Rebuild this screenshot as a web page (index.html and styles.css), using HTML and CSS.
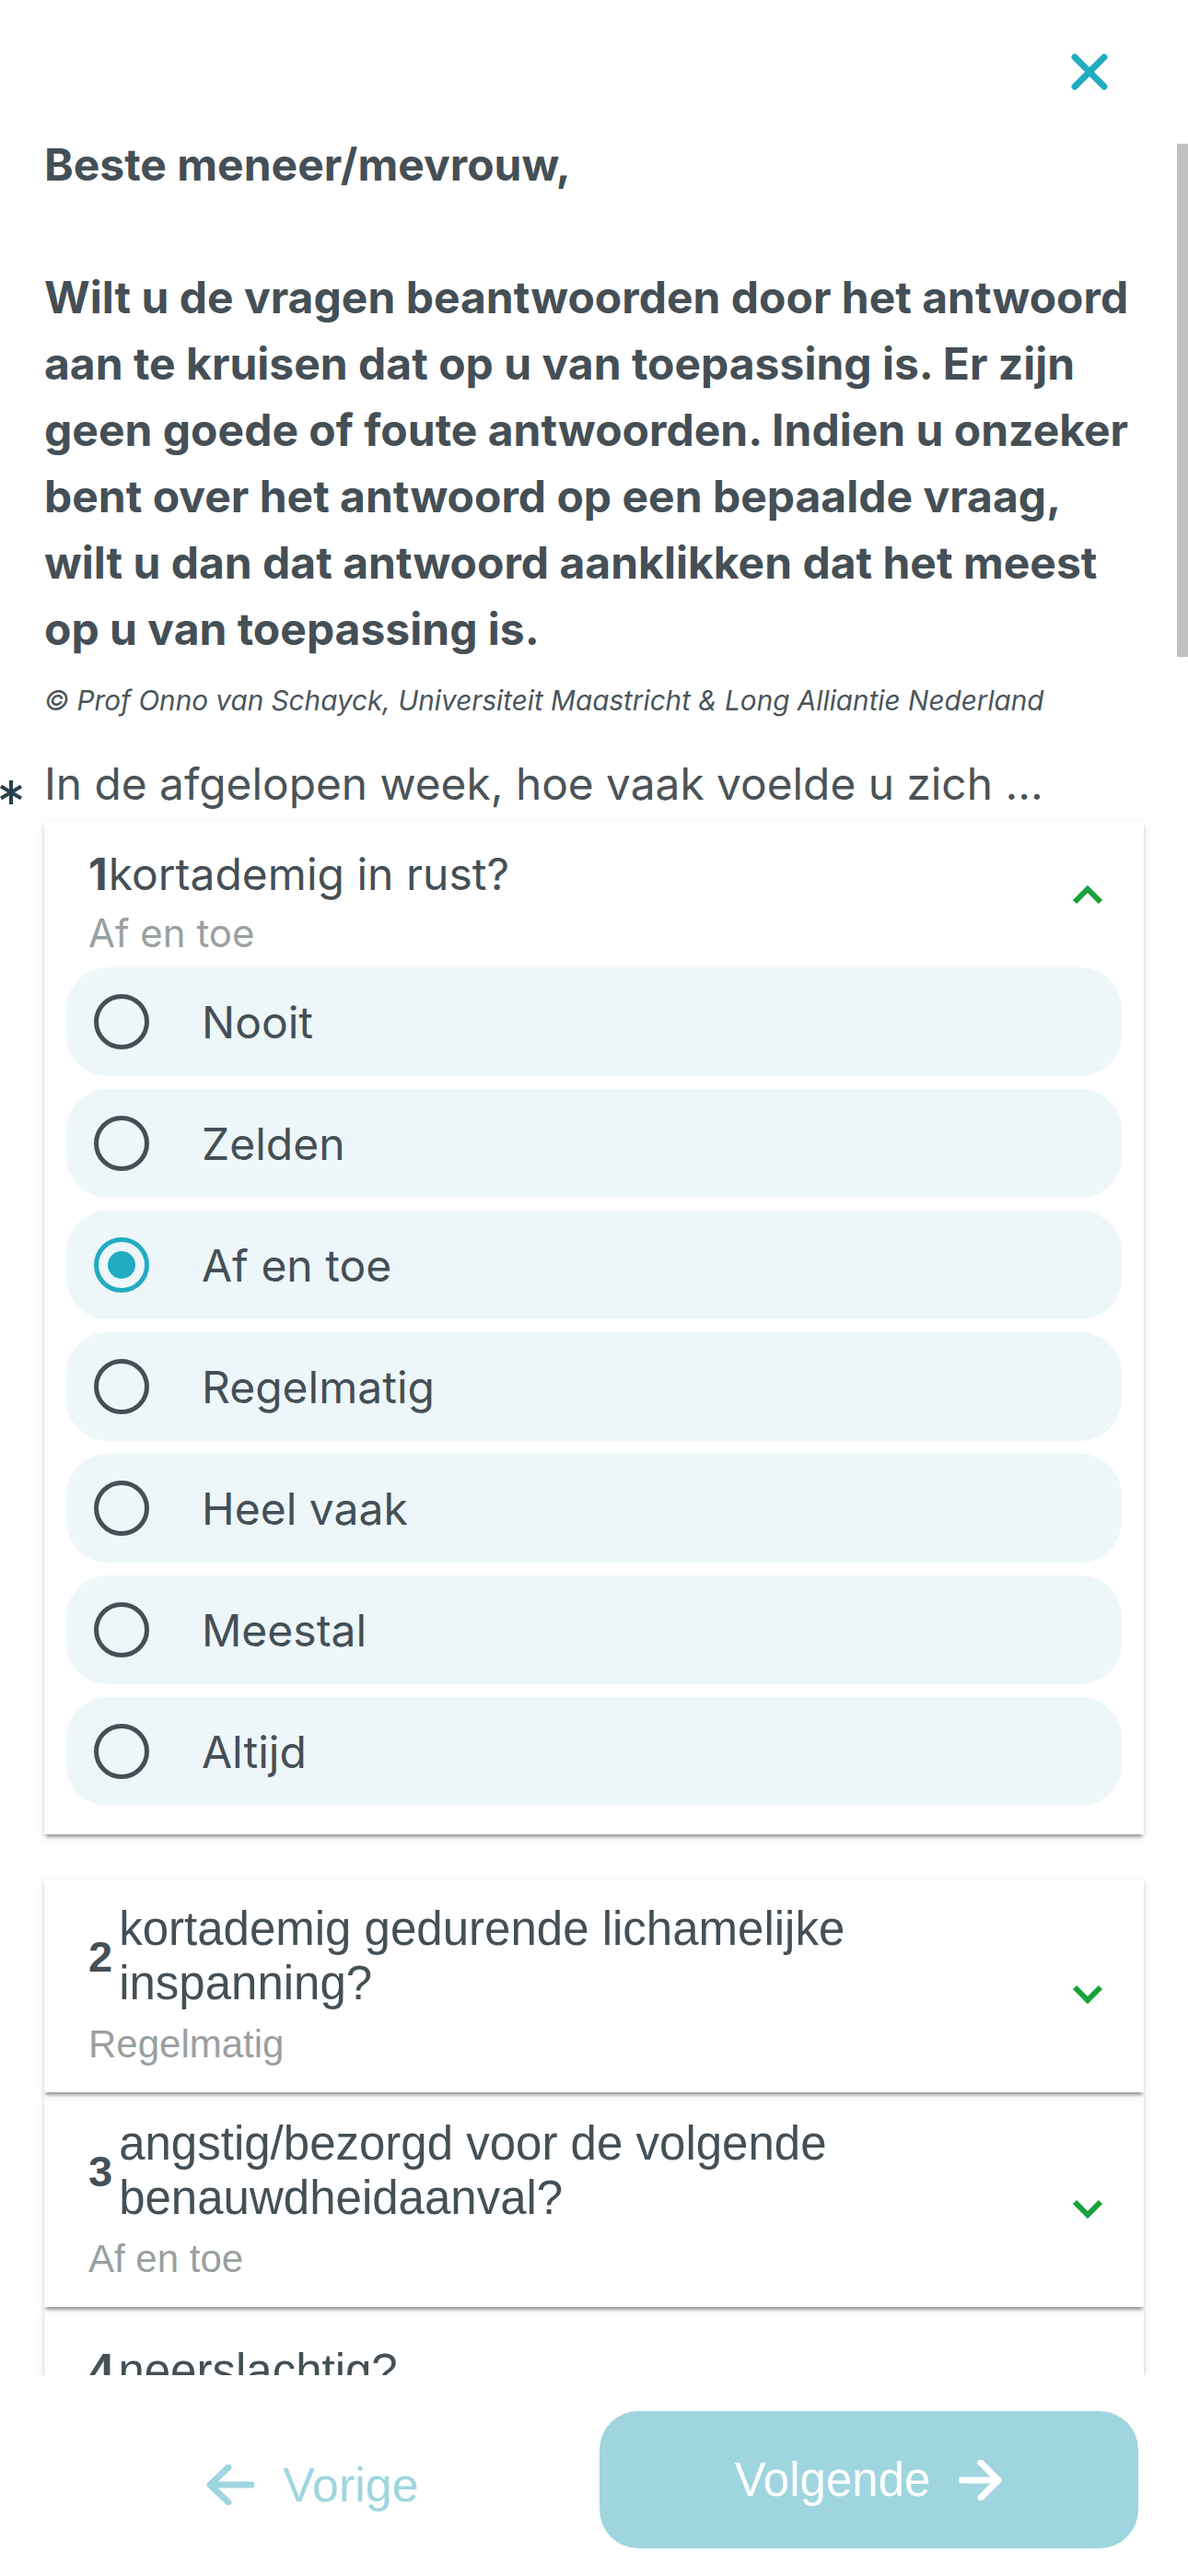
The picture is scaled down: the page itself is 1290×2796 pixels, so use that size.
FILE: index.html
```html
<!DOCTYPE html>
<html lang="nl">
<head>
<meta charset="utf-8">
<title>Vragenlijst</title>
<link rel="stylesheet" href="styles.css">
</head>
<body>
<div class="screen">
  <main class="content">
    <div class="topbar">
      <svg class="close" viewBox="0 0 40 40" aria-label="Sluiten"><path d="M4 4 L36 36 M36 4 L4 36" stroke="#21acc2" stroke-width="7" stroke-linecap="round" fill="none"/></svg>
    </div>
    <p class="intro">Beste meneer/mevrouw,<br><br>Wilt u de vragen beantwoorden door het antwoord aan te kruisen dat op u van toepassing is. Er zijn geen goede of foute antwoorden. Indien u onzeker bent over het antwoord op een bepaalde vraag, wilt u dan dat antwoord aanklikken dat het meest op u van toepassing is.</p>
    <p class="copyright">© Prof Onno van Schayck, Universiteit Maastricht &amp; Long Alliantie Nederland</p>
    <div class="question">
      <span class="req"><svg viewBox="0 0 24 28" width="24" height="28"><path d="M12 1 V27 M1 7.5 L23 20.5 M23 7.5 L1 20.5" stroke="#26414c" stroke-width="4" fill="none"/></svg></span>
      <span>In de afgelopen week, hoe vaak voelde u zich ...</span>
    </div>

    <section class="card card-open">
      <div class="card-head">
        <div class="head-main">
          <div class="title-row"><span class="num">1</span><span class="title">kortademig in rust?</span></div>
          <div class="answer">Af en toe</div>
        </div>
        <svg class="chev chev-up" viewBox="0 0 34 22"><path d="M3 19 L17 5 L31 19" stroke="#17a23a" stroke-width="6" fill="none"/></svg>
      </div>
      <div class="options">
        <div class="option"><span class="radio"></span><span>Nooit</span></div>
        <div class="option"><span class="radio"></span><span>Zelden</span></div>
        <div class="option"><span class="radio checked"></span><span>Af en toe</span></div>
        <div class="option"><span class="radio"></span><span>Regelmatig</span></div>
        <div class="option"><span class="radio"></span><span>Heel vaak</span></div>
        <div class="option"><span class="radio"></span><span>Meestal</span></div>
        <div class="option"><span class="radio"></span><span>Altijd</span></div>
      </div>
    </section>

    <section class="card card-alt layer-3">
      <div class="card-head">
        <div class="head-main">
          <div class="title-row"><span class="num">2</span><span class="title">kortademig gedurende lichamelijke inspanning?</span></div>
          <div class="answer">Regelmatig</div>
        </div>
        <svg class="chev chev-down" viewBox="0 0 34 22"><path d="M3 3 L17 17 L31 3" stroke="#17a23a" stroke-width="6" fill="none"/></svg>
      </div>
    </section>

    <section class="card card-alt layer-2">
      <div class="card-head">
        <div class="head-main">
          <div class="title-row"><span class="num">3</span><span class="title">angstig/bezorgd voor de volgende benauwdheidaanval?</span></div>
          <div class="answer">Af en toe</div>
        </div>
        <svg class="chev chev-down" viewBox="0 0 34 22"><path d="M3 3 L17 17 L31 3" stroke="#17a23a" stroke-width="6" fill="none"/></svg>
      </div>
    </section>

    <section class="card card-alt card-single layer-1">
      <div class="card-head">
        <div class="head-main">
          <div class="title-row"><span class="num">4</span><span class="title">neerslachtig?</span></div>
          <div class="answer">Af en toe</div>
        </div>
        <svg class="chev chev-down" viewBox="0 0 34 22"><path d="M3 3 L17 17 L31 3" stroke="#17a23a" stroke-width="6" fill="none"/></svg>
      </div>
    </section>
  </main>

  <footer class="footer">
    <button class="btn btn-prev" type="button">
      <svg class="arrow" viewBox="0 0 52 44" width="52" height="44"><path d="M49 22 H5 M24 3 L4 22 L24 41" stroke="#9fd6e0" stroke-width="7" stroke-linecap="round" stroke-linejoin="round" fill="none"/></svg>
      <span>Vorige</span>
    </button>
    <button class="btn btn-next" type="button">
      <span>Volgende</span>
      <svg class="arrow" viewBox="0 0 48 44" width="48" height="44"><path d="M3 22 H43 M24 3 L43 22 L24 41" stroke="#ffffff" stroke-width="7" stroke-linecap="round" stroke-linejoin="round" fill="none"/></svg>
    </button>
  </footer>

  <div class="scrollbar"></div>
</div>
</body>
</html>
```

FILE: styles.css
```css
html, body {
  margin: 0;
  padding: 0;
}

body {
  width: 1290px;
  height: 2796px;
  overflow: hidden;
  background: #ffffff;
  font-family: Inter, "Liberation Sans", sans-serif;
  color: #454f56;
}

.screen {
  position: relative;
  height: 2796px;
  display: flex;
  flex-direction: column;
}

.content {
  flex: none;
  height: 2578px;
  overflow: hidden;
  padding: 0 48px;
  box-sizing: border-box;
}

.topbar {
  display: flex;
  justify-content: flex-end;
  padding: 58px 39px 0 0;
}

.close {
  width: 40px;
  height: 40px;
  display: block;
}

.intro {
  margin: 45px 0 0;
  font-weight: 700;
  font-size: 48px;
  line-height: 72px;
  color: #454f56;
}

.copyright {
  margin: 21px 0 0;
  font-style: italic;
  font-size: 29.7px;
  line-height: 40px;
  color: #4b555b;
}

.question {
  display: flex;
  align-items: center;
  margin: 42px 0 0 -48px;
  font-size: 47.8px;
  line-height: 58px;
  color: #4a5358;
}

.req {
  flex: none;
  width: 48px;
  display: flex;
  margin-top: 17px;
}

.req svg {
  display: block;
}

.card {
  position: relative;
  background: #ffffff;
  box-shadow: 0 6px 3px -3px rgba(0, 0, 0, 0.2), 0 3px 3px 0 rgba(0, 0, 0, 0.14), 0 3px 9px 0 rgba(0, 0, 0, 0.12);
}

.layer-3 {
  z-index: 3;
}

.layer-2 {
  z-index: 2;
}

.layer-1 {
  z-index: 1;
}

.card-open {
  margin-top: 12px;
  margin-bottom: 49px;
}

.card-alt + .card-alt {
  margin-top: 2px;
}

.card-head {
  display: flex;
  align-items: center;
  padding: 24px 44px 28px 48px;
}

.card-open .card-head {
  padding: 27px 44px 0 48px;
}

.card-single .card-head {
  padding-top: 38px;
}

.head-main {
  flex: 1;
  min-width: 0;
  margin-right: 30px;
}

.title-row {
  display: flex;
  align-items: center;
}

.num {
  flex: none;
  font-weight: 700;
}

.title {
  flex: 1;
  min-width: 0;
}

.card-open .title-row {
  font-size: 48px;
  color: #454f56;
}

.card-open .num {
  margin-right: 1px;
}

.card-alt .title-row {
  font-family: "Liberation Sans", Arial, sans-serif;
  font-size: 51px;
  color: #454f56;
}

.card-alt .num {
  font-size: 47px;
  margin-right: 7px;
}

.card-single .num {
  font-size: 51px;
  margin-right: 4px;
}

.answer {
  margin-top: 9px;
  font-size: 42px;
  color: #9a9fa1;
}

.card-alt .answer {
  margin-top: 13px;
  font-family: "Liberation Sans", Arial, sans-serif;
}

.chev {
  flex: none;
  width: 34px;
  height: 22px;
  display: block;
}

.chev-up {
  margin-bottom: 16px;
}

.chev-down {
  margin-top: 22px;
}

.options {
  display: flex;
  flex-direction: column;
  gap: 14px;
  padding: 12px 24px 31px;
}

.option {
  height: 118px;
  border-radius: 45px;
  background: #edf6f9;
  display: flex;
  align-items: center;
  gap: 57px;
  padding-left: 30px;
  font-size: 48px;
  color: #454f56;
}

.radio {
  flex: none;
  width: 60px;
  height: 60px;
  box-sizing: border-box;
  border: 5px solid #454f56;
  border-radius: 50%;
  display: flex;
  align-items: center;
  justify-content: center;
}

.radio.checked {
  border-color: #21acc2;
}

.radio.checked::after {
  content: "";
  width: 30px;
  height: 30px;
  border-radius: 50%;
  background: #21acc2;
}

.footer {
  flex: none;
  height: 218px;
  box-sizing: border-box;
  display: flex;
  gap: 19px;
  padding: 39px 54px 30px 47px;
  background: #ffffff;
}

.btn {
  flex: 1;
  height: 149px;
  border: none;
  border-radius: 42px;
  display: flex;
  align-items: center;
  justify-content: center;
  gap: 31px;
  font-family: "Liberation Sans", Arial, sans-serif;
  font-size: 51px;
  padding: 0;
  cursor: pointer;
}

.btn-prev {
  background: transparent;
  color: #9fd6e0;
  padding-top: 10px;
}

.btn-prev span {
  font-size: 52px;
}

.btn-next {
  background: #9fd5df;
  color: #ffffff;
}

.arrow {
  display: block;
  flex: none;
}

.scrollbar {
  position: absolute;
  top: 156px;
  right: 0;
  width: 12px;
  height: 557px;
  background: #c1c1c1;
}
```
